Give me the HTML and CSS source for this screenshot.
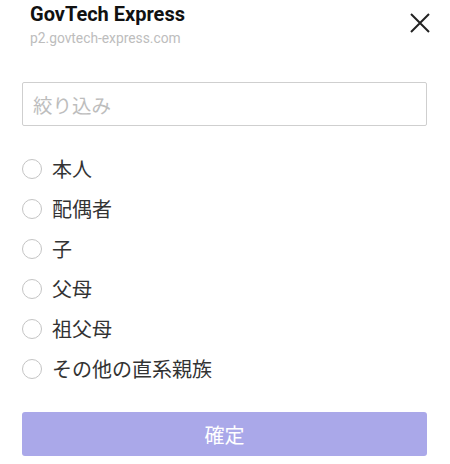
FILE: index.html
```html
<!DOCTYPE html>
<html lang="ja">
<head>
<meta charset="utf-8">
<link rel="stylesheet" href="styles.css">
</head>
<body>
<div class="sheet">
  <header class="head">
    <div class="titles">
      <div class="title">GovTech Express</div>
      <div class="sub">p2.govtech-express.com</div>
    </div>
    <button class="close" aria-label="close">
      <svg width="20" height="20" viewBox="0 0 20 20"><path d="M1 1L19 19M19 1L1 19" stroke="#222" stroke-width="2" fill="none"/></svg>
    </button>
  </header>
  <input class="filter" type="text" placeholder="絞り込み">
  <ul class="opts">
    <li class="opt"><span class="radio"></span><span class="lbl">本人</span></li>
    <li class="opt"><span class="radio"></span><span class="lbl">配偶者</span></li>
    <li class="opt"><span class="radio"></span><span class="lbl">子</span></li>
    <li class="opt"><span class="radio"></span><span class="lbl">父母</span></li>
    <li class="opt"><span class="radio"></span><span class="lbl">祖父母</span></li>
    <li class="opt"><span class="radio"></span><span class="lbl">その他の直系親族</span></li>
  </ul>
  <button class="ok">確定</button>
</div>
</body>
</html>
```
FILE: styles.css
```css
* { box-sizing: border-box; }
html, body { margin: 0; padding: 0; background: #fff; }
body { font-family: Roboto, "Noto Sans CJK JP", sans-serif; }
.sheet { width: 450px; height: 464px; padding: 0 23px 0 22px; display: flex; flex-direction: column; }
.head { display: flex; justify-content: space-between; align-items: flex-start; padding-left: 8px; height: 82px; }
.title { font-size: 20px; font-weight: 700; color: #111; line-height: 24px; margin-top: 2px; }
.sub { font-size: 13.8px; color: #bdbdbd; line-height: 16px; margin-top: 4px; }
.close { border: 0; background: none; padding: 0; margin: 13px -3px 0 0; width: 20px; height: 20px; }
.close svg { display: block; }
.filter { width: 405px; height: 44px; border: 1px solid #cfcfcf; border-radius: 2px; padding: 0 10px; font-family: "Noto Sans CJK JP", sans-serif; font-size: 19.5px; color: #333; outline: none; }
.filter::placeholder { color: #bdbdbd; }
.opts { list-style: none; margin: 23px 0 0; padding: 0; }
.opt { display: flex; align-items: center; height: 40px; }
.radio { width: 20px; height: 20px; border: 1.5px solid #c4c4c4; border-radius: 50%; flex: none; }
.lbl { margin-left: 10px; font-family: "Noto Sans CJK JP", sans-serif; font-size: 20px; color: #333; line-height: 24px; }
.ok { margin-top: 23px; width: 405px; height: 44px; border: 0; border-radius: 3px; background: #aaa8e9; color: #fff; font-family: "Noto Sans CJK JP", sans-serif; font-size: 20px; }
```
